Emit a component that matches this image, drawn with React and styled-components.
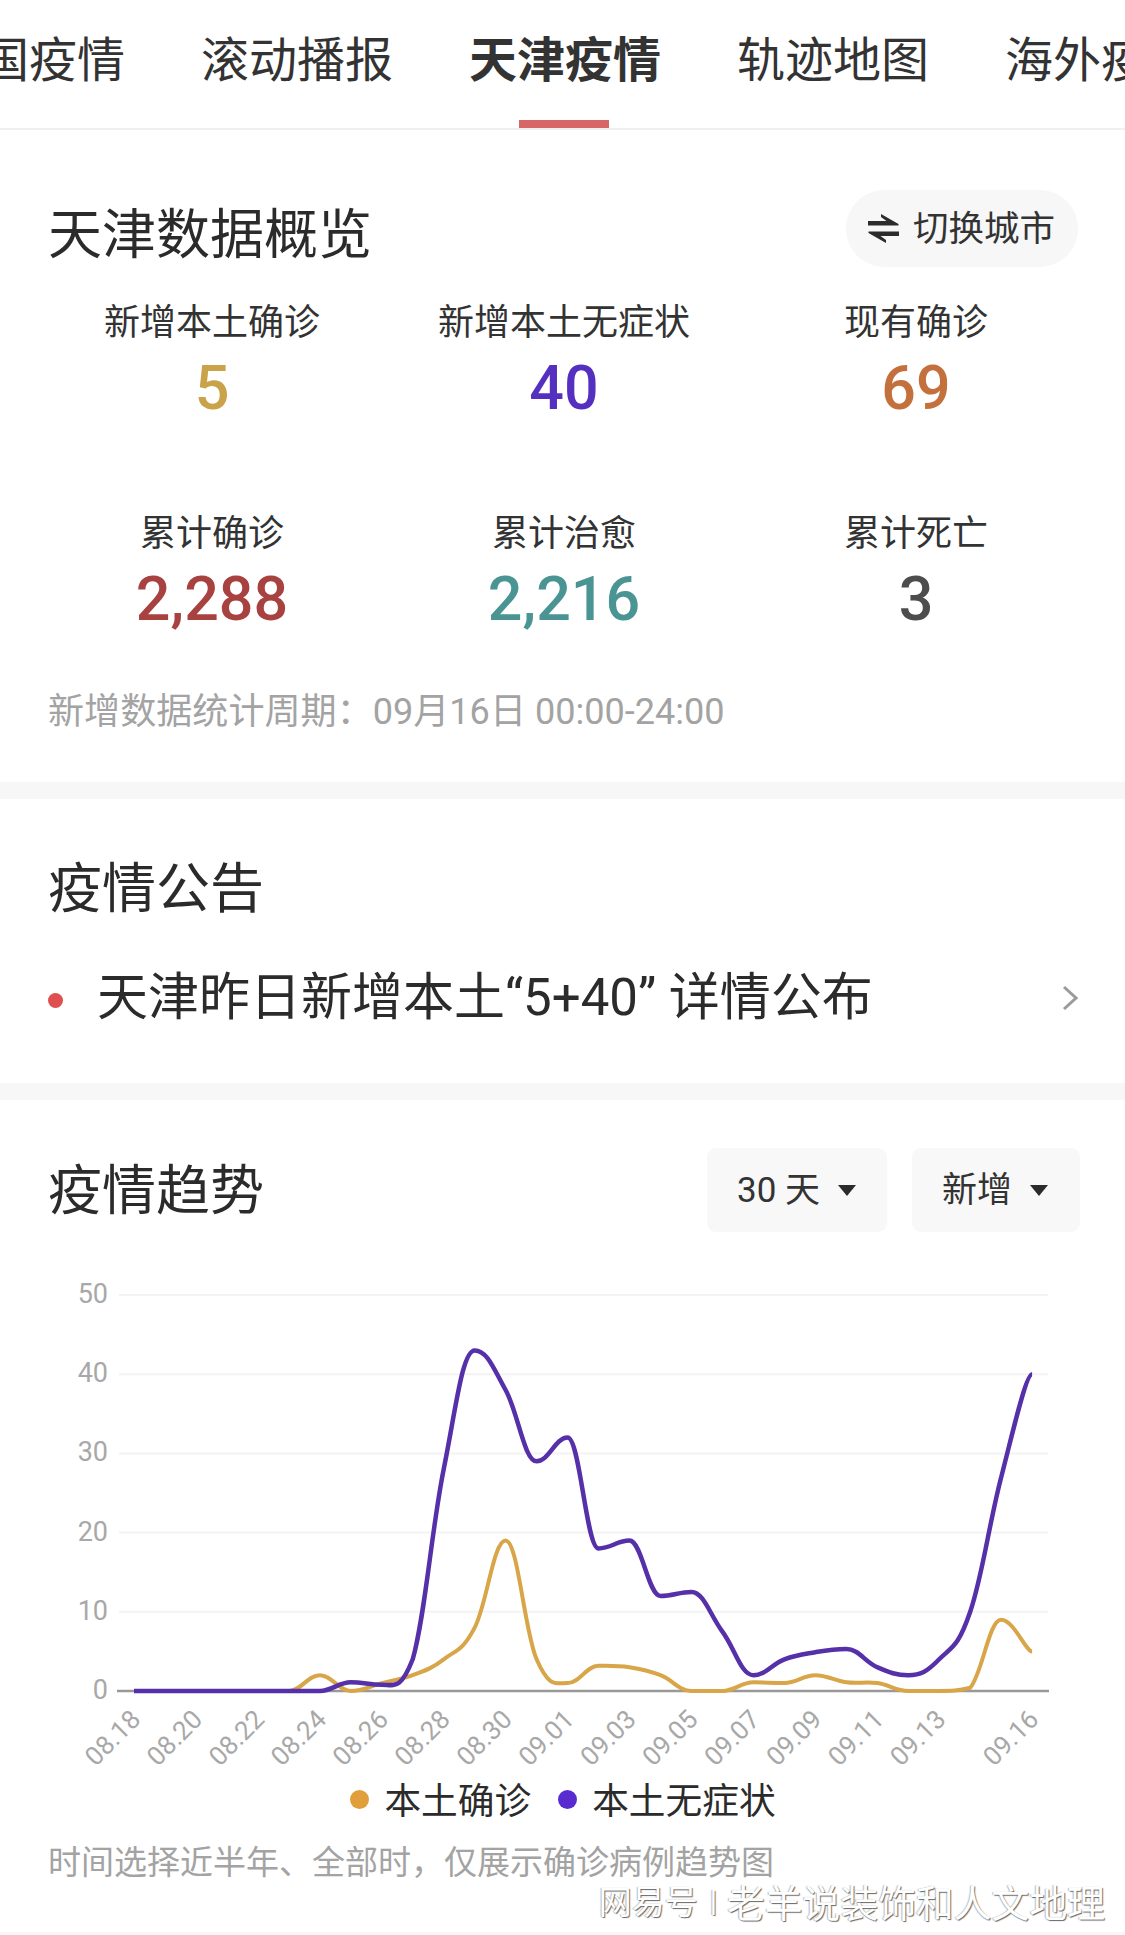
import styled, { createGlobalStyle } from 'styled-components';

const GlobalStyle = createGlobalStyle`
  html, body {
    margin: 0;
    padding: 0;
    background: #fff;
  }

  body {
    font-family: Roboto, "Noto Sans CJK SC", sans-serif;
    color: #2b2b2b;
  }
`;

const Page = styled.div`
  position: relative;
  width: 1125px;
  height: 1935px;
  overflow: hidden;
  background: #fff;
`;

const TabBar = styled.div`
  height: 128px;
  border-bottom: 2px solid #f0f0f0;
  overflow: hidden;
`;

const TabList = styled.div`
  display: flex;
  gap: 76px;
  margin-left: -67px;
`;

const Tab = styled.div`
  position: relative;
  flex-shrink: 0;
  width: 192px;
  height: 128px;
  padding-top: 27px;
  box-sizing: border-box;
  font-size: 48px;
  line-height: 68px;
  text-align: center;
  white-space: nowrap;
  color: #333;
  font-weight: ${(props) => (props.$active ? 700 : 400)};

  &::after {
    content: '';
    display: ${(props) => (props.$active ? 'block' : 'none')};
    position: absolute;
    left: 50px;
    bottom: 0;
    width: 90px;
    height: 8px;
    background: #d96666;
  }
`;

const Section = styled.section`
  padding: ${(props) => props.$padding};
`;

const Divider = styled.div`
  height: 17px;
  background: #f7f7f7;
`;

const SectionHead = styled.div`
  display: flex;
  justify-content: space-between;
  align-items: flex-start;
`;

const Title = styled.h2`
  margin: ${(props) => props.$margin || 0};
  font-size: 54px;
  font-weight: 400;
  line-height: 77px;
  color: #2b2b2b;
`;

const SwitchButton = styled.div`
  display: flex;
  align-items: center;
  gap: 14px;
  width: 232px;
  height: 77px;
  padding: 0 0 7px 22px;
  box-sizing: border-box;
  border-radius: 38px;
  background: #f7f7f7;
  font-size: 35.5px;
  color: #333;
`;

const SwitchIcon = styled.svg`
  flex-shrink: 0;
  margin-top: 7px;
`;

const StatGrid = styled.div`
  display: grid;
  grid-template-columns: repeat(3, 352px);
  row-gap: 86px;
  margin: 24px 0 0 -12px;
`;

const Stat = styled.div`
  text-align: center;
`;

const StatLabel = styled.div`
  font-size: 36px;
  line-height: 50px;
  color: #333;
`;

const StatValue = styled.div`
  margin-top: 5px;
  font-size: 61px;
  font-weight: 500;
  line-height: 70px;
  color: ${(props) => props.$color};
`;

const Note = styled.p`
  margin: ${(props) => props.$margin};
  font-size: ${(props) => props.$size}px;
  line-height: 44px;
  color: #a3a3a3;
  white-space: nowrap;
`;

const NoticeRow = styled.div`
  display: flex;
  align-items: center;
  margin-top: 35px;
  height: 70px;
`;

const NoticeDot = styled.span`
  flex-shrink: 0;
  width: 15px;
  height: 15px;
  margin: 4px 34px 0 0;
  border-radius: 50%;
  background: #e04f4f;
`;

const NoticeText = styled.div`
  flex: 1;
  font-size: 51px;
  line-height: 70px;
  color: #2b2b2b;
  white-space: nowrap;
`;

const Dropdowns = styled.div`
  display: flex;
  gap: 25px;
  margin-right: -2px;
`;

const Dropdown = styled.div`
  display: flex;
  align-items: center;
  gap: 18px;
  width: ${(props) => props.$width}px;
  height: 84px;
  padding: 0 0 8px 30px;
  box-sizing: border-box;
  border-radius: 9px;
  background: #f8f8f8;
  font-size: 35px;
  color: #333;
`;

const Caret = styled.span`
  width: 0;
  height: 0;
  margin-top: 8px;
  border-left: 9px solid transparent;
  border-right: 9px solid transparent;
  border-top: 11px solid #2b2b2b;
`;

const Chart = styled.svg`
  display: block;
  width: 1125px;
  height: 504px;
  margin: 37px 0 0 -48px;
`;

const AxisLabel = styled.text`
  font-family: Roboto, sans-serif;
  font-size: ${(props) => props.$size}px;
  fill: #a8a8a8;
`;

const Legend = styled.div`
  display: flex;
  justify-content: center;
  align-items: center;
  gap: 27px;
  height: 50px;
`;

const LegendItem = styled.div`
  display: flex;
  align-items: center;
  gap: 15px;
  font-size: 36.7px;
  color: #2b2b2b;
`;

const LegendDot = styled.span`
  width: 19px;
  height: 19px;
  margin-top: 2px;
  border-radius: 50%;
  background: ${(props) => props.$color};
`;

const BottomEdge = styled.div`
  position: absolute;
  left: 0;
  right: 0;
  bottom: 0;
  height: 3px;
  background: #f7f7f7;
`;

const Watermark = styled.div`
  position: absolute;
  right: 20px;
  bottom: 15px;
  display: flex;
  align-items: center;
  height: 40px;
  color: #fff;
  text-shadow: 1px 1px 1px #666, -1px 0 1px #bbb;
  white-space: nowrap;
`;

const WatermarkBrand = styled.span`
  font-size: 33px;
`;

const WatermarkPipe = styled.span`
  margin: 0 10px 0 12px;
  font-size: 30px;
`;

const WatermarkName = styled.span`
  font-size: 37.8px;
`;

const tabs = ['全国疫情', '滚动播报', '天津疫情', '轨迹地图', '海外疫情'];

const stats = [
  { label: '新增本土确诊', value: '5', color: '#c9a24a' },
  { label: '新增本土无症状', value: '40', color: '#5530c0' },
  { label: '现有确诊', value: '69', color: '#c4703c' },
  { label: '累计确诊', value: '2,288', color: '#a84240' },
  { label: '累计治愈', value: '2,216', color: '#4a9494' },
  { label: '累计死亡', value: '3', color: '#4d4d4d' },
];

const confirmed = [0, 0, 0, 0, 0, 0, 2, 0, 1, 2, 4, 8, 19, 4, 1, 3.2, 3, 2, 0, 0, 1.1, 1, 2, 1.1, 1, 0, 0, 0.4, 9, 5];
const asymptomatic = [0, 0, 0, 0, 0, 0, 0, 1.1, 0.8, 4, 28, 43, 38, 29, 32, 18, 19, 12, 12.5, 7.5, 2, 4, 4.9, 5.3, 3, 2, 4, 10, 27, 40];

const xLabels = [
  [0, '08.18'], [2, '08.20'], [4, '08.22'], [6, '08.24'], [8, '08.26'], [10, '08.28'], [12, '08.30'],
  [14, '09.01'], [16, '09.03'], [18, '09.05'], [20, '09.07'], [22, '09.09'], [24, '09.11'], [26, '09.13'], [29, '09.16'],
];

// chart coordinates, svg top is at page y 1270
const BASE_Y = 422;
const UNIT_Y = 7.92;
const xAt = (i) => 134 + i * 30.97;
const yAt = (v) => BASE_Y - v * UNIT_Y;

// flat tangent on a local peak or dip so the top stays on the data point
const slope = (prev, cur, next) => {
  if ((cur[1] - prev[1]) * (next[1] - cur[1]) <= 0) return 0;
  return (next[1] - prev[1]) * 0.2;
};

function smoothPath(values) {
  const pts = values.map((v, i) => [xAt(i), yAt(v)]);
  let d = `M${pts[0][0]} ${pts[0][1]}`;
  for (let i = 0; i < pts.length - 1; i += 1) {
    const prev = pts[i - 1] || pts[i];
    const cur = pts[i];
    const next = pts[i + 1];
    const after = pts[i + 2] || next;
    const c1x = cur[0] + (next[0] - prev[0]) * 0.2;
    const c1y = Math.min(cur[1] + slope(prev, cur, next), BASE_Y);
    const c2x = next[0] - (after[0] - cur[0]) * 0.2;
    const c2y = Math.min(next[1] - slope(cur, next, after), BASE_Y);
    d += ` C${c1x.toFixed(1)} ${c1y.toFixed(1)} ${c2x.toFixed(1)} ${c2y.toFixed(1)} ${next[0].toFixed(1)} ${next[1].toFixed(1)}`;
  }
  return d;
}

function SwapIcon() {
  return (
    <SwitchIcon width="31" height="29" viewBox="0 0 31 29" fill="#2b2b2b">
      <path d="M13 0L30.5 10V11.5H0V7H18.5L13 3Z" />
      <path d="M18 29L0.5 19V17.5H31V22H12.5L18 26Z" />
    </SwitchIcon>
  );
}

function Chevron() {
  return (
    <svg width="16" height="26" viewBox="0 0 16 26" fill="none" stroke="#9a9a9a" strokeWidth="3">
      <path d="M2 2L14 13L2 24" />
    </svg>
  );
}

function TrendChart() {
  return (
    <Chart viewBox="0 0 1125 504">
      {[50, 40, 30, 20, 10].map((v) => (
        <line key={v} x1="119" x2="1048" y1={yAt(v)} y2={yAt(v)} stroke="#f3f3f3" strokeWidth="2" />
      ))}
      <line x1="117" x2="1049" y1={BASE_Y} y2={BASE_Y} stroke="#999" strokeWidth="2.5" />
      {[50, 40, 30, 20, 10, 0].map((v) => (
        <AxisLabel key={v} $size={27} x="108" y={yAt(v) + 8} textAnchor="end">
          {v}
        </AxisLabel>
      ))}
      <path d={smoothPath(confirmed)} fill="none" stroke="#d8a548" strokeWidth="4" strokeLinejoin="round" />
      <path d={smoothPath(asymptomatic)} fill="none" stroke="#5530a8" strokeWidth="4.5" strokeLinejoin="round" />
      {xLabels.map(([i, text]) => (
        <AxisLabel
          key={text}
          $size={26}
          x={xAt(i) + 8}
          y={452}
          textAnchor="end"
          transform={`rotate(-45 ${xAt(i) + 8} 452)`}
        >
          {text}
        </AxisLabel>
      ))}
    </Chart>
  );
}

export default function App() {
  return (
    <Page>
      <GlobalStyle />
      <TabBar>
        <TabList>
          {tabs.map((tab) => (
            <Tab key={tab} $active={tab === '天津疫情'}>{tab}</Tab>
          ))}
        </TabList>
      </TabBar>

      <Section $padding="60px 47px 48px 48px">
        <SectionHead>
          <Title $margin="7px 0 0">天津数据概览</Title>
          <SwitchButton>
            <SwapIcon />
            切换城市
          </SwitchButton>
        </SectionHead>
        <StatGrid>
          {stats.map((stat) => (
            <Stat key={stat.label}>
              <StatLabel>{stat.label}</StatLabel>
              <StatValue $color={stat.color}>{stat.value}</StatValue>
            </Stat>
          ))}
        </StatGrid>
        <Note $size={36.1} $margin="56px 0 0">新增数据统计周期：09月16日 00:00-24:00</Note>
      </Section>
      <Divider />

      <Section $padding="52px 47px 50px 48px">
        <Title>疫情公告</Title>
        <NoticeRow>
          <NoticeDot />
          <NoticeText>天津昨日新增本土“5+40” 详情公布</NoticeText>
          <Chevron />
        </NoticeRow>
      </Section>
      <Divider />

      <Section $padding="48px 47px 0 48px">
        <SectionHead>
          <Title $margin="5px 0 0">疫情趋势</Title>
          <Dropdowns>
            <Dropdown $width={180}>30 天<Caret /></Dropdown>
            <Dropdown $width={168}>新增<Caret /></Dropdown>
          </Dropdowns>
        </SectionHead>
        <TrendChart />
        <Legend>
          <LegendItem><LegendDot $color="#e09f3a" />本土确诊</LegendItem>
          <LegendItem><LegendDot $color="#5a2cd0" />本土无症状</LegendItem>
        </Legend>
        <Note $size={33} $margin="18px 0 0">时间选择近半年、全部时，仅展示确诊病例趋势图</Note>
      </Section>

      <Watermark>
        <WatermarkBrand>网易号</WatermarkBrand>
        <WatermarkPipe>|</WatermarkPipe>
        <WatermarkName>老羊说装饰和人文地理</WatermarkName>
      </Watermark>
      <BottomEdge />
    </Page>
  );
}
